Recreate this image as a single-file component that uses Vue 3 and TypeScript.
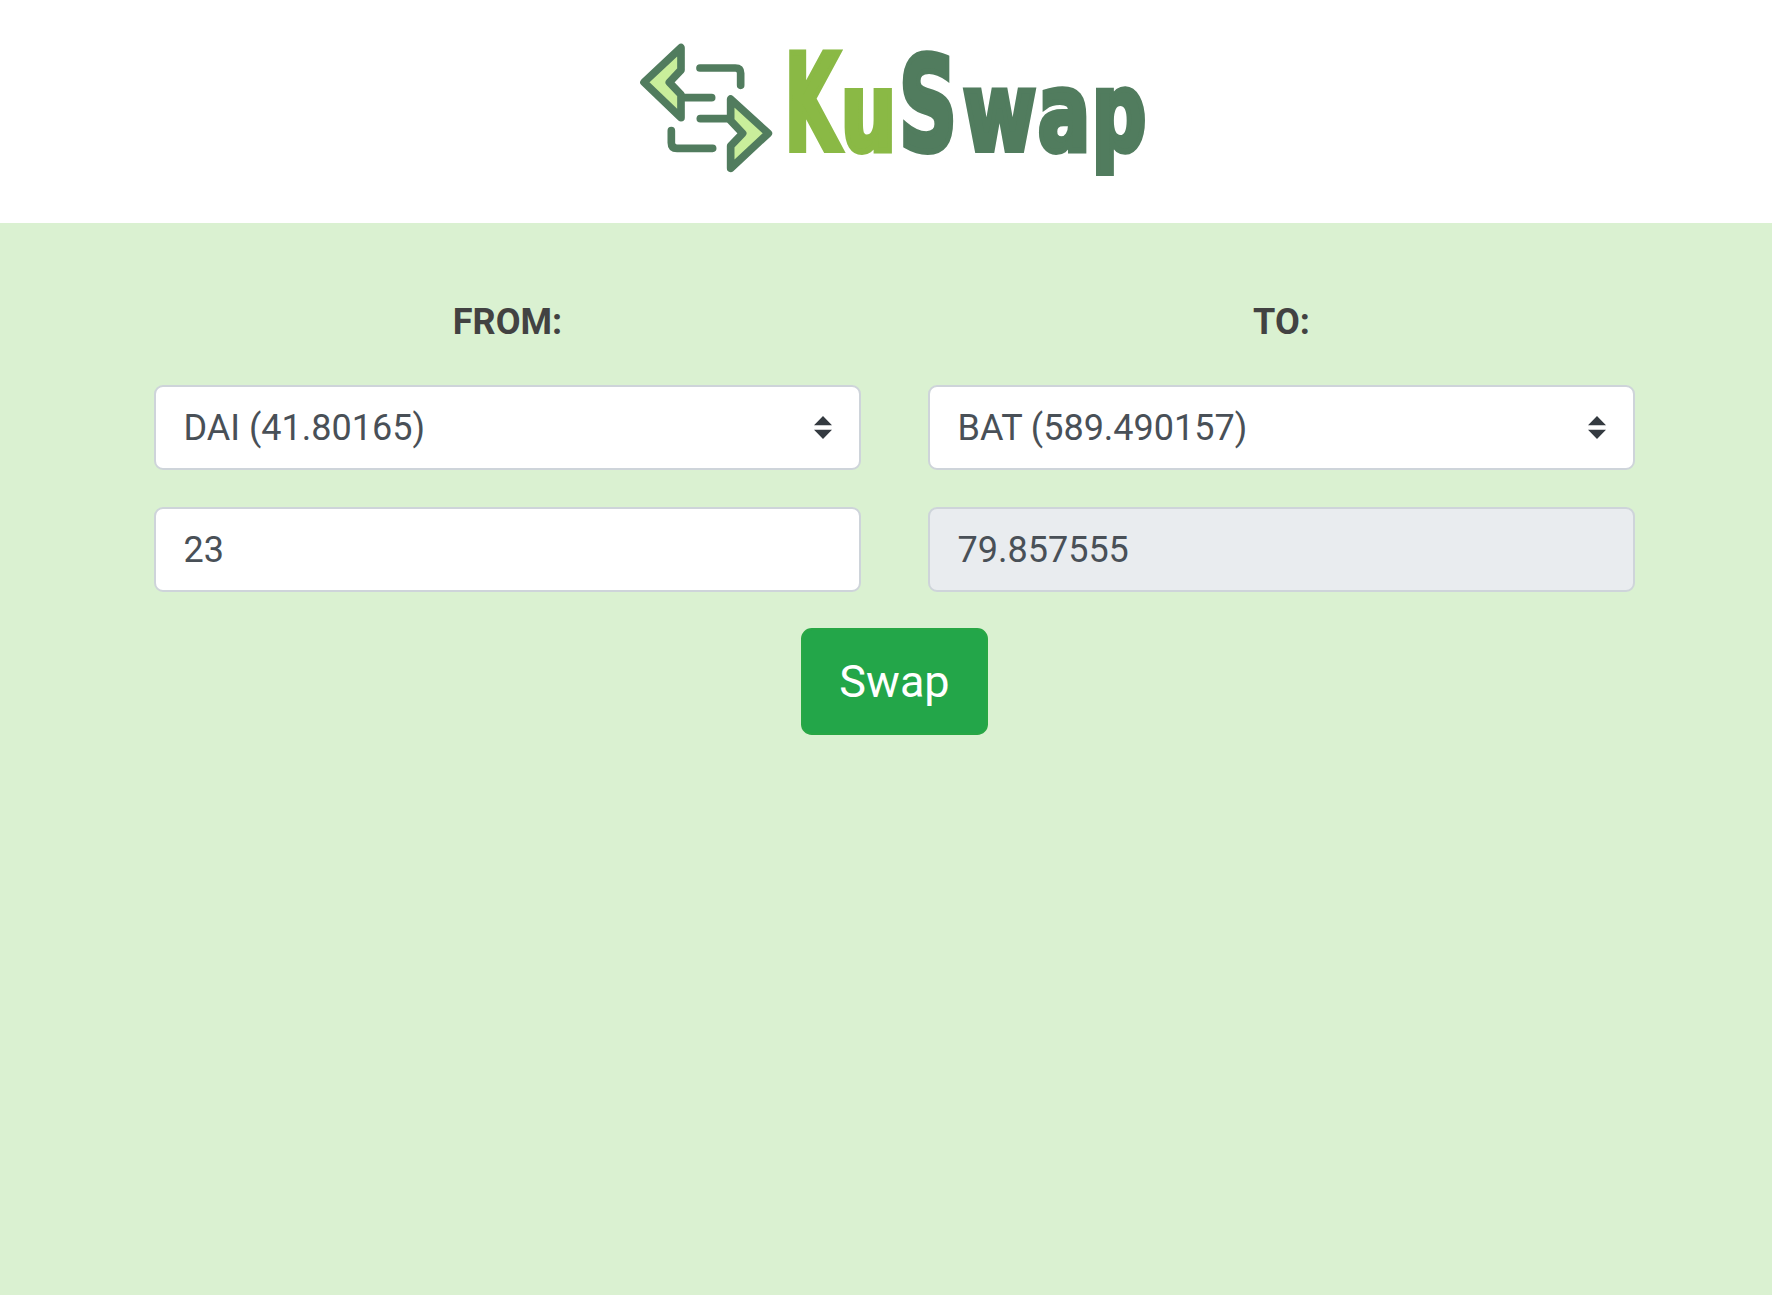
<script setup lang="ts">
import { ref } from 'vue';

const fromToken = ref('DAI');
const toToken = ref('BAT');
const amount = ref('23');
const received = ref('79.857555');

const tokens = [
  { value: 'DAI', label: 'DAI (41.80165)' },
  { value: 'BAT', label: 'BAT (589.490157)' },
];

// wordmark letters, drawn as text and squeezed to the logo's widths
const letters = [
  { ch: 'K', x: 784.5, w: 55, y: 150, size: 134, fill: '#8ab945' },
  { ch: 'u', x: 841, w: 55, y: 150, size: 108, fill: '#8ab945' },
  { ch: 'S', x: 899, w: 58, y: 150, size: 130, fill: '#517c5e' },
  { ch: 'w', x: 963, w: 73, y: 150, size: 108, fill: '#517c5e' },
  { ch: 'a', x: 1038, w: 52, y: 150, size: 108, fill: '#517c5e' },
  { ch: 'p', x: 1092, w: 54, y: 150, size: 108, fill: '#517c5e' },
];
</script>

<template>
  <div class="page">
    <header class="top">
      <svg class="logo" viewBox="620 20 540 170" width="540" height="170" role="img" aria-label="KuSwap">
        <g transform="translate(620 20) scale(0.3333)">
          <g fill="none" stroke="#517c5e" stroke-width="23" stroke-linecap="round" stroke-linejoin="round">
            <path d="M240 144H346Q362 144 362 160V196" />
            <path d="M190 233H275" />
            <path d="M241 296H330" />
            <path d="M154 332V368Q154 385 171 385H278" />
          </g>
          <g fill="#c9ee9b" stroke="#517c5e" stroke-width="23" stroke-linejoin="round">
            <path d="M72 187L183 83V150L148 187L183 224V293Z" />
            <path d="M445 340L332 237V302L368 340L332 378V445Z" />
          </g>
        </g>
        <text
          v-for="l in letters"
          :key="l.ch"
          class="mark"
          :x="l.x"
          :y="l.y"
          :fill="l.fill"
          :stroke="l.fill"
          :font-size="l.size"
          :textLength="l.w"
          lengthAdjust="spacingAndGlyphs"
        >{{ l.ch }}</text>
      </svg>
    </header>

    <main class="swap">
      <div class="cols">
        <section class="col">
          <h5 class="label">FROM:</h5>
          <select v-model="fromToken" class="field select">
            <option v-for="t in tokens" :key="t.value" :value="t.value">{{ t.label }}</option>
          </select>
          <input v-model="amount" class="field entry" type="text" />
        </section>
        <section class="col">
          <h5 class="label">TO:</h5>
          <select v-model="toToken" class="field select">
            <option v-for="t in tokens" :key="t.value" :value="t.value">{{ t.label }}</option>
          </select>
          <input v-model="received" class="field entry" type="text" disabled />
        </section>
      </div>
      <button class="go" type="button">Swap</button>
    </main>
  </div>
</template>

<style>
html, body { margin: 0; background: #daf1d1; }
</style>

<style scoped>
.page { min-height: 1295px; font-family: Roboto, "Liberation Sans", sans-serif; color: #495057; display: flex; flex-direction: column; }
.top { height: 223px; background: #fff; display: flex; justify-content: flex-start; padding-left: 620px; padding-top: 20px; box-sizing: border-box; }
.logo { display: block; }
.mark { font-family: "DejaVu Sans", "Liberation Sans", sans-serif; font-weight: 700; font-stretch: condensed; stroke-width: 6px; stroke-linejoin: miter; }

.swap { flex: 1; background: #daf1d1; padding: 78px 137px 0 154px; display: flex; flex-direction: column; align-items: center; }
.cols { width: 100%; display: grid; grid-template-columns: 1fr 1fr; column-gap: 67px; }
.col { display: flex; flex-direction: column; }
.label { margin: 0 0 42px; text-align: center; font-size: 36px; line-height: 42px; font-weight: 700; color: #424242; }

.field {
  box-sizing: border-box; width: 100%; height: 85px; margin: 0 0 36.5px;
  padding: 0 27.5px; border: 2.25px solid #ced4da; border-radius: 9px;
  background-color: #fff; color: #495057; font: 400 36px/1.5 Roboto, "Liberation Sans", sans-serif; outline: none;
}
.entry { padding-top: 1px; }
.field:disabled { background-color: #e9ecef; color: #495057; opacity: 1; }
.select {
  appearance: none; -webkit-appearance: none;
  background-image: url("data:image/svg+xml,%3csvg xmlns='http://www.w3.org/2000/svg' viewBox='0 0 4 5'%3e%3cpath fill='%23343a40' d='M2 0L0 2h4zm0 5L0 3h4z'/%3e%3c/svg%3e");
  background-repeat: no-repeat; background-position: right 27px center; background-size: 18px 22.5px;
}

.go {
  box-sizing: border-box; width: 187px; height: 107px; padding: 0;
  border: 2.25px solid #28a745; border-radius: 10.8px; background: #23a649; color: #fff;
  font: 400 45px/1.5 Roboto, "Liberation Sans", sans-serif; cursor: pointer;
}
</style>
